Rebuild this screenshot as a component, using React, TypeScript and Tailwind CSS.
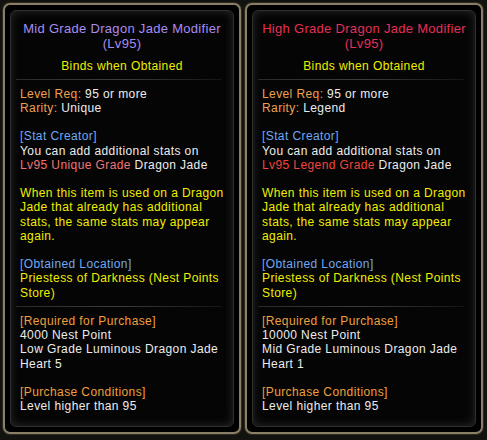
const white = "text-[#ececec]";
const yellow = "text-[#f0ee00]";
const orange = "text-[#ef9f3c]";
const label = "text-[#eea052]";
const blue = "text-[#6fa8f2]";

function Separator() {
  return (
    <div className="h-[14.2px] flex items-center -mx-[4px] pr-[6px]">
      <div className="h-px w-full bg-gradient-to-r from-[#2a2a2a] via-[#3d3d3d] to-[#151515]" />
    </div>
  );
}

function Blank() {
  return <div className="h-[14.2px]" />;
}

type ItemProps = {
  title: string;
  titleColor: string;
  rarity: string;
  gradeText: string;
  gradeColor: string;
  points: string;
  heart: string;
  heartCount: string;
};

function Tooltip(props: ItemProps) {
  return (
    <div className="w-[238px] h-[431px] rounded-[7px] border-2 border-[#8a7f66] bg-black p-[5px] shadow-[0_0_0_1px_#2c2a22]">
      <div className="h-full rounded-[6px] border border-[#2f2f2f] bg-[#050505] shadow-[inset_0_0_10px_rgba(110,110,110,0.35)] px-[9px] pt-[10px]">
        <div className={`text-center text-[13px] leading-[15px] tracking-[0.3px] ${props.titleColor}`}>
          <div>{props.title}</div>
          <div>(Lv95)</div>
        </div>
        <div className="text-[12px] leading-[14.2px] tracking-[0.4px] whitespace-nowrap">
          <div className={`mt-[7.5px] text-center ${yellow}`}>Binds when Obtained</div>
          <Separator />
          <div>
            <span className={label}>Level Req: </span>
            <span className={white}>95 or more</span>
          </div>
          <div>
            <span className={label}>Rarity: </span>
            <span className={white}>{props.rarity}</span>
          </div>
          <Blank />
          <div className={blue}>[Stat Creator]</div>
          <div className={white}>You can add additional stats on</div>
          <div>
            <span className={props.gradeColor}>{props.gradeText}</span>
            <span className={white}> Dragon Jade</span>
          </div>
          <Blank />
          <div className={yellow}>
            <div>When this item is used on a Dragon</div>
            <div>Jade that already has additional</div>
            <div>stats, the same stats may appear</div>
            <div>again.</div>
          </div>
          <Blank />
          <div className={blue}>[Obtained Location]</div>
          <div className={yellow}>
            <div>Priestess of Darkness (Nest Points</div>
            <div>Store)</div>
          </div>
          <Separator />
          <div className={orange}>[Required for Purchase]</div>
          <div className={white}>{props.points}</div>
          <div className={white}>{props.heart}</div>
          <div className={white}>Heart {props.heartCount}</div>
          <Blank />
          <div className={orange}>[Purchase Conditions]</div>
          <div className={white}>Level higher than 95</div>
        </div>
      </div>
    </div>
  );
}

export default function App() {
  return (
    <div
      className="w-[487px] h-[440px] bg-[#12120e] pl-[3px] pt-[3px] flex gap-[4px] overflow-hidden"
      style={{ fontFamily: '"Liberation Sans", Arial, sans-serif' }}
    >
      <Tooltip
        title="Mid Grade Dragon Jade Modifier"
        titleColor="text-[#a98cf2]"
        rarity="Unique"
        gradeText="Lv95 Unique Grade"
        gradeColor="text-[#f07474]"
        points="4000 Nest Point"
        heart="Low Grade Luminous Dragon Jade"
        heartCount="5"
      />
      <Tooltip
        title="High Grade Dragon Jade Modifier"
        titleColor="text-[#e62e58]"
        rarity="Legend"
        gradeText="Lv95 Legend Grade"
        gradeColor="text-[#f2443c]"
        points="10000 Nest Point"
        heart="Mid Grade Luminous Dragon Jade"
        heartCount="1"
      />
    </div>
  );
}
